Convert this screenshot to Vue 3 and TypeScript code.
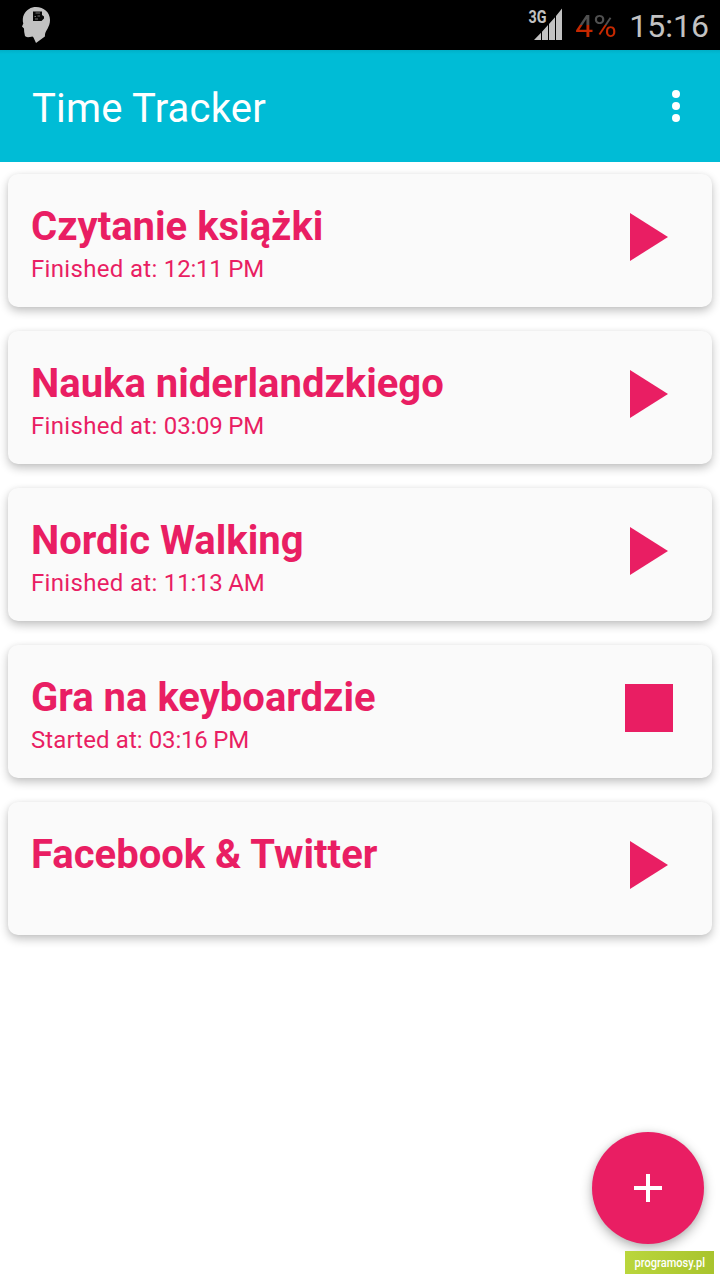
<script setup lang="ts">
interface Task {
  name: string
  label: string
  time: string
  running: boolean
}

const tasks: Task[] = [
  { name: 'Czytanie książki', label: 'Finished at: ', time: '12:11 PM', running: false },
  { name: 'Nauka niderlandzkiego', label: 'Finished at: ', time: '03:09 PM', running: false },
  { name: 'Nordic Walking', label: 'Finished at: ', time: '11:13 AM', running: false },
  { name: 'Gra na keyboardzie', label: 'Started at: ', time: '03:16 PM', running: true },
  { name: 'Facebook & Twitter', label: '', time: '', running: false },
]
</script>

<template>
  <div class="screen">
    <div class="status-bar">
      <svg class="head" width="30" height="38" viewBox="0 0 30 38">
        <path
          d="M16 1C24 1 30 6.500 30 14C30 21 25.500 24.500 25 28.500L24.900 30.500L16 37L13.500 31.500L12.500 30.500Q6 32 5 30L4.200 26L4 22.500L2 20.500L3.300 17.500C2.500 15 2.600 11 4 8.500C6.500 3.500 11 1 16 1Z"
          fill="#c2c2c2"
        />
        <path d="M13 5.500H22V9L24 10.500V12.500L21.500 15H13Z" fill="#080808" />
        <path d="M15.500 7H20M14.500 10.500H16M17.500 10H20M15 13H18" stroke="#777" stroke-width="1" />
      </svg>
      <div class="indicators">
        <svg class="signal" width="36" height="36" viewBox="0 0 36 36">
          <text x="0.500" y="18" textLength="18" lengthAdjust="spacingAndGlyphs">3G</text>
          <path
            d="M6 35L13 27.800V35ZM14 35V26.700L20 20V35ZM21 35V18.900L27 12.200V35ZM28 35V11L34 3.500V35Z"
            fill="#c2c2c2"
          />
        </svg>
        <span class="battery">4%</span>
        <span class="clock">15:16</span>
      </div>
    </div>

    <header class="app-bar">
      <h1>Time Tracker</h1>
      <button class="menu" aria-label="Menu"><i></i><i></i><i></i></button>
    </header>

    <main class="list">
      <article v-for="task in tasks" :key="task.name" class="card" :class="{ running: task.running }">
        <div class="info">
          <h2>{{ task.name }}</h2>
          <p><span class="label">{{ task.label }}</span><span class="time">{{ task.time }}</span></p>
        </div>
        <svg class="action" width="48" height="48" viewBox="0 0 48 48">
          <rect v-if="task.running" width="48" height="48" />
          <path v-else d="M5 0L43 24L5 48Z" />
        </svg>
      </article>
    </main>

    <button class="fab" aria-label="Add">
      <svg width="28" height="28" viewBox="0 0 28 28">
        <path d="M12 0H16V12H28V16H16V28H12V16H0V12H12Z" fill="#fff" />
      </svg>
    </button>
    <svg class="watermark" width="89" height="23" viewBox="0 0 89 23">
      <defs>
        <linearGradient id="lime" x1="0" x2="1">
          <stop offset="0" stop-color="#bad63c" />
          <stop offset="1" stop-color="#a9c42d" />
        </linearGradient>
      </defs>
      <rect width="89" height="23" fill="url(#lime)" />
      <text x="9.500" y="15.500" textLength="70.500" lengthAdjust="spacingAndGlyphs">programosy.pl</text>
    </svg>
  </div>
</template>

<style>
body {
  background: #fff;
}
</style>

<style scoped>
.screen {
  position: relative;
  width: 720px;
  height: 1280px;
  overflow: hidden;
  background: #fff;
  font-family: Roboto, sans-serif;
}
.status-bar {
  display: flex;
  justify-content: space-between;
  height: 50px;
  background: #000;
  color: #c2c2c2;
}
.head {
  margin: 6px 0 0 20px;
}
.indicators {
  display: flex;
  padding-right: 11px;
  line-height: 52px;
}
.signal {
  margin: 5px 11px 0 0;
}
.signal text {
  font-size: 19px;
  font-weight: 700;
  fill: #c2c2c2;
}
.battery {
  width: 43px;
  margin-right: 11px;
  font-size: 32px;
  white-space: nowrap;
  color: transparent;
  background: linear-gradient(#505050 0 25px, #c62800 25px);
  background-clip: text;
}
.clock {
  font-size: 32px;
}
.app-bar {
  display: flex;
  justify-content: space-between;
  align-items: center;
  box-sizing: border-box;
  height: 112px;
  padding: 0 40px 0 32px;
  background: linear-gradient(#00afc7, #00bcd6 4px);
}
h1 {
  margin: 5px 0 0;
  font-size: 40px;
  line-height: 48px;
  font-weight: 400;
  letter-spacing: 0.2px;
  color: #fff;
}
.menu {
  display: grid;
  gap: 4px;
  padding: 0;
  border: 0;
  background: none;
}
.menu i {
  width: 8px;
  height: 8px;
  border-radius: 50%;
  background: #fff;
}
.list {
  display: grid;
  gap: 24px;
  padding: 12px 8px;
}
.card {
  display: flex;
  justify-content: space-between;
  box-sizing: border-box;
  height: 133px;
  padding: 28px 39px 0 23px;
  border-radius: 10px;
  background: #fafafa;
  color: #e91e63;
  box-shadow: 0 4px 10px rgba(0, 0, 0, 0.24), 0 0 4px rgba(0, 0, 0, 0.04);
}
h2 {
  margin: 1px 0 0;
  font-size: 40px;
  line-height: 48px;
  font-weight: 700;
}
p {
  margin: 4px 0 0;
  font-size: 24px;
  line-height: 28px;
  white-space: pre;
}
.label {
  letter-spacing: 0.32px;
}
.running .label {
  letter-spacing: 0.1px;
}
.time {
  letter-spacing: -0.2px;
}
.action {
  margin-top: 11px;
  fill: #e91e63;
}
.fab {
  position: absolute;
  left: 592px;
  top: 1132px;
  display: grid;
  place-items: center;
  width: 112px;
  height: 112px;
  padding: 0;
  border: 0;
  border-radius: 50%;
  background: #e91e63;
  box-shadow: 0 4px 12px rgba(0, 0, 0, 0.3), 0 0 6px rgba(0, 0, 0, 0.06);
}
.watermark {
  position: absolute;
  left: 625px;
  top: 1251px;
}
.watermark text {
  font-size: 13.5px;
  font-weight: 500;
  fill: #fff;
}
</style>
